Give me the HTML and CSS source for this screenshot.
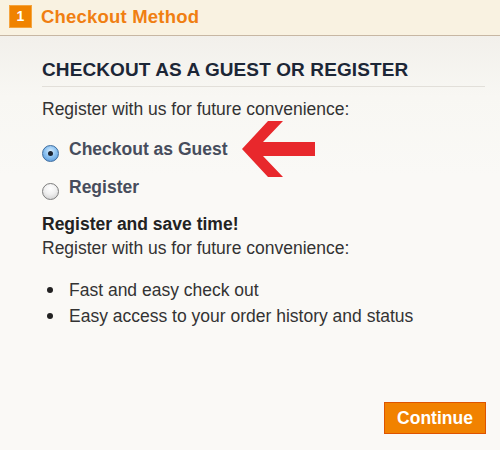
FILE: index.html
```html
<!DOCTYPE html>
<html>
<head>
<meta charset="utf-8">
<link rel="stylesheet" href="styles.css">
</head>
<body>
<div class="panel">
  <div class="step-head">
    <span class="badge">1</span>
    <span class="step-title">Checkout Method</span>
  </div>
  <div class="step-body">
    <h2 class="section-title">CHECKOUT AS A GUEST OR REGISTER</h2>
    <p class="intro">Register with us for future convenience:</p>
    <div class="options">
      <div class="option">
        <span class="radio checked"></span>
        <span class="option-label">Checkout as Guest</span>
        <svg class="arrow" width="80" height="60" viewBox="240 120 80 60"><polygon points="242,150 268,122 283,122 263,143 315,143 315,157 263,157 283,178 268,178" fill="#e8282c"/></svg>
      </div>
      <div class="option">
        <span class="radio"></span>
        <span class="option-label">Register</span>
      </div>
    </div>
    <p class="save"><strong>Register and save time!</strong><br>Register with us for future convenience:</p>
    <ul class="benefits">
      <li>Fast and easy check out</li>
      <li>Easy access to your order history and status</li>
    </ul>
    <div class="actions">
      <button class="continue">Continue</button>
    </div>
  </div>
</div>
</body>
</html>
```

FILE: styles.css
```css
html, body {
  margin: 0;
  padding: 0;
}
body {
  width: 500px;
  height: 450px;
  overflow: hidden;
  font-family: "Liberation Sans", Arial, Helvetica, sans-serif;
  background: #faf9f6;
}
.panel {
  height: 450px;
  display: flex;
  flex-direction: column;
}
.step-head {
  height: 36px;
  box-sizing: border-box;
  background: #f9f2e1;
  border-bottom: 1px solid #c7b7a3;
  box-shadow: 0 1px 0 #e6ddd2;
  display: flex;
  align-items: flex-start;
  padding: 5px 0 0 9px;
}
.badge {
  width: 23px;
  height: 23px;
  background: #f08300;
  box-shadow: inset 0 0 0 1px #f5a43d;
  color: #fff;
  font-weight: bold;
  font-size: 14px;
  line-height: 23px;
  text-align: center;
}
.step-title {
  margin-left: 9px;
  color: #f07f12;
  font-weight: bold;
  font-size: 18.5px;
  line-height: 23px;
  letter-spacing: 0.2px;
}
.step-body {
  flex: 1;
  background: linear-gradient(#f2f0eb 0px, #f8f7f3 60px, #faf9f6 140px);
  padding: 23px 15px 0 42px;
  display: flex;
  flex-direction: column;
}
.section-title {
  margin: 0;
  font-size: 19px;
  line-height: 22px;
  font-weight: bold;
  color: #1c2636;
  padding-bottom: 5px;
  border-bottom: 1px solid #e2dfd9;
  letter-spacing: 0.1px;
}
.intro {
  margin: 12px 0 0;
  font-size: 17.5px;
  line-height: 20px;
  color: #333;
}
.options {
  margin-top: 20px;
}
.option {
  height: 38px;
  display: flex;
  align-items: flex-start;
  position: relative;
}
.radio {
  width: 17px;
  height: 17px;
  box-sizing: border-box;
  border-radius: 50%;
  margin-top: 6px;
  margin-right: 10px;
  border: 1px solid #7d7d7d;
  background: radial-gradient(circle at 50% 30%, #ffffff 0%, #f0f0f0 45%, #c9c9c9 100%);
  position: relative;
}
.radio.checked {
  border-color: #3d6c9e;
  background: radial-gradient(circle at 50% 35%, #d7ecfd 0%, #8ec3f1 45%, #4d8fd4 100%);
}
.radio.checked::after {
  content: "";
  position: absolute;
  left: 50%;
  top: 50%;
  width: 5px;
  height: 5px;
  margin: -2.5px 0 0 -2.5px;
  border-radius: 50%;
  background: #1a2230;
}
.option-label {
  font-size: 17.5px;
  line-height: 20px;
  font-weight: bold;
  color: #474d5c;
}
.arrow {
  position: absolute;
  left: 198px;
  top: -20px;
}
.save {
  margin: -3px 0 0;
  font-size: 17.5px;
  line-height: 24px;
  color: #333;
}
.save strong {
  color: #222;
}
.benefits {
  list-style: none;
  margin: 17px 0 0;
  padding: 0;
}
.benefits li {
  font-size: 17.5px;
  line-height: 26px;
  color: #333;
  padding-left: 27px;
  position: relative;
}
.benefits li::before {
  content: "";
  position: absolute;
  left: 5px;
  top: 10px;
  width: 6px;
  height: 6px;
  border-radius: 50%;
  background: #222;
}
.actions {
  display: flex;
  justify-content: flex-end;
  margin-top: 73px;
}
.continue {
  width: 102px;
  height: 32px;
  margin-right: -1px;
  background: #f18200;
  border: 1px solid #de5400;
  color: #fff;
  font-family: "Liberation Sans", Arial, Helvetica, sans-serif;
  font-size: 17.5px;
  font-weight: bold;
  padding: 0;
}
```
